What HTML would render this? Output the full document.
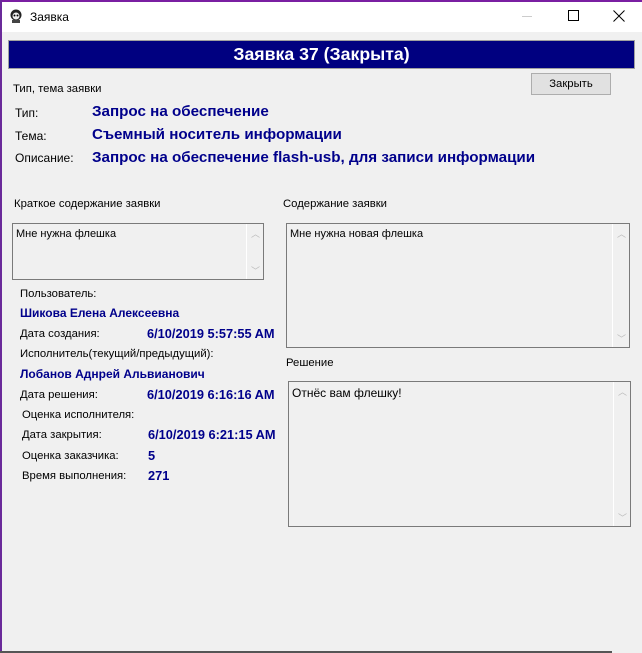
<!DOCTYPE html>
<html><head><meta charset="utf-8"><style>
*{margin:0;padding:0;box-sizing:border-box}
body{width:642px;height:653px;background:#f0f0f0;font-family:"Liberation Sans",sans-serif;font-size:11.3px;color:#000;position:relative;overflow:hidden}
.a{position:absolute;white-space:nowrap}
.b{font-weight:bold;color:#00008b;font-size:12.8px}
.bb{font-weight:bold;color:#00008b;font-size:15.2px}
.box{position:absolute;border:1px solid #7a7a7a;background:#f0f0f0;padding:4px 3px;font-size:11px}
.sb{position:absolute;right:0;top:0;bottom:0;width:17px;border-left:1px solid #fff}
.sb span{position:absolute;left:4px;color:#bbb;font-size:9px}
</style></head><body>
<div class="a" style="left:0;top:0;width:642px;height:2px;background:#7a1fa2"></div>
<div class="a" style="left:0;top:2px;width:642px;height:30px;background:#fff"></div>
<div class="a" style="left:0;top:0;width:2px;height:653px;background:#6a2a9a"></div>
<svg class="a" style="left:9px;top:9px" width="14" height="15" viewBox="0 0 14 15"><circle cx="7" cy="6" r="5.5" fill="#222"/><circle cx="7" cy="7" r="3.5" fill="#eee"/><circle cx="5.5" cy="6.5" r="1" fill="#000"/><circle cx="8.5" cy="6.5" r="1" fill="#000"/><rect x="3" y="11" width="8" height="3" fill="#444"/></svg>
<div class="a" style="left:30px;top:10px;font-size:12px">Заявка</div>
<div class="a" style="left:522px;top:16px;width:10px;height:1px;background:#ccc"></div>
<div class="a" style="left:568px;top:10px;width:11px;height:11px;border:1px solid #000"></div>
<svg class="a" style="left:613px;top:10px" width="12" height="12"><path d="M0.5 0.5L11.5 11.5M11.5 0.5L0.5 11.5" stroke="#000" stroke-width="1"/></svg>
<div class="a" style="left:8px;top:40px;width:627px;height:29px;background:#000080;border:1px solid #a0a0a0;color:#fff;font-weight:bold;font-size:17.7px;text-align:center;line-height:26px">Заявка 37 (Закрыта)</div>
<div class="a" style="left:531px;top:73px;width:80px;height:22px;background:#e1e1e1;border:1px solid #adadad;text-align:center;line-height:20px">Закрыть</div>
<div class="a" style="left:13px;top:83px">Тип, тема заявки</div>
<div class="a" style="left:15px;top:106px;font-size:12px">Тип:</div>
<div class="a bb" style="left:92px;top:103px">Запрос на обеспечение</div>
<div class="a" style="left:15px;top:129px;font-size:12px">Тема:</div>
<div class="a bb" style="left:92px;top:126px">Съемный носитель информации</div>
<div class="a" style="left:15px;top:151px;font-size:12px">Описание:</div>
<div class="a bb" style="left:92px;top:149px">Запрос на обеспечение flash-usb, для записи информации</div>
<div class="a" style="left:14px;top:198px">Краткое содержание заявки</div>
<div class="a" style="left:283px;top:198px">Содержание заявки</div>
<div class="box" style="left:12px;top:223px;width:252px;height:57px">Мне нужна флешка<div class="sb"><span style="top:3px">︿</span><span style="bottom:2px">﹀</span></div></div>
<div class="box" style="left:286px;top:223px;width:344px;height:125px">Мне нужна новая флешка<div class="sb"><span style="top:3px">︿</span><span style="bottom:2px">﹀</span></div></div>
<div class="a" style="left:286px;top:357px">Решение</div>
<div class="box" style="left:288px;top:381px;width:343px;height:146px;font-size:12px">Отнёс вам флешку!<div class="sb"><span style="top:3px">︿</span><span style="bottom:2px">﹀</span></div></div>
<div class="a" style="left:20px;top:288px">Пользователь:</div>
<div class="a b" style="left:20px;top:306px;font-size:12px">Шикова Елена Алексеевна</div>
<div class="a" style="left:20px;top:328px">Дата создания:</div>
<div class="a b" style="left:147px;top:326px">6/10/2019 5:57:55 AM</div>
<div class="a" style="left:20px;top:348px">Исполнитель(текущий/предыдущий):</div>
<div class="a b" style="left:20px;top:367px;font-size:12px">Лобанов Аднрей Альвианович</div>
<div class="a" style="left:20px;top:389px">Дата решения:</div>
<div class="a b" style="left:147px;top:387px">6/10/2019 6:16:16 AM</div>
<div class="a" style="left:22px;top:409px">Оценка исполнителя:</div>
<div class="a" style="left:22px;top:429px">Дата закрытия:</div>
<div class="a b" style="left:148px;top:427px">6/10/2019 6:21:15 AM</div>
<div class="a" style="left:22px;top:450px">Оценка заказчика:</div>
<div class="a b" style="left:148px;top:448px">5</div>
<div class="a" style="left:22px;top:470px">Время выполнения:</div>
<div class="a b" style="left:148px;top:468px">271</div>
<div class="a" style="left:0;top:651px;width:612px;height:2px;background:#555"></div>
</body></html>
